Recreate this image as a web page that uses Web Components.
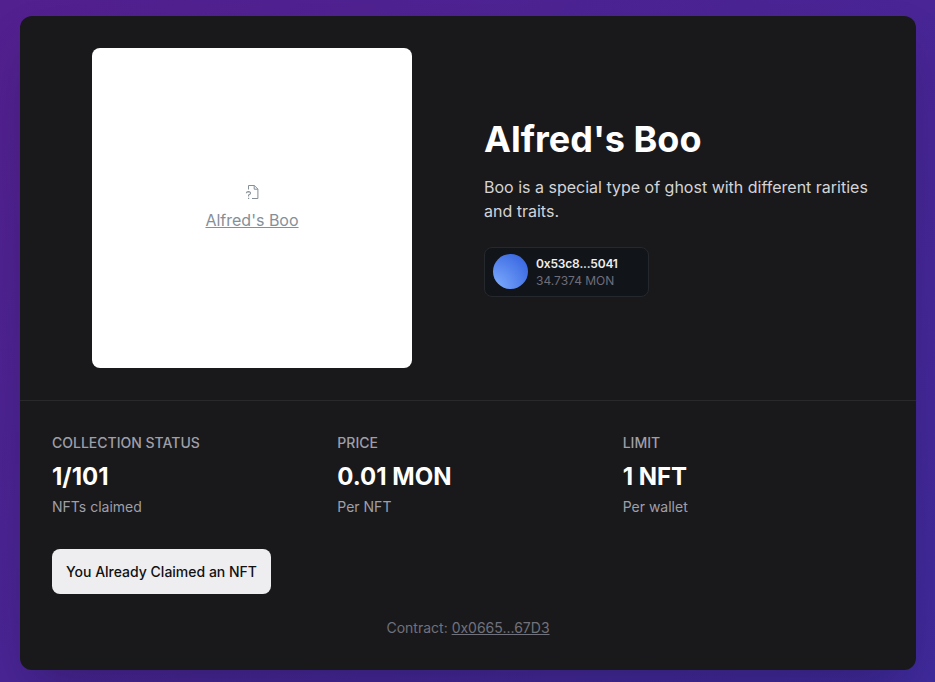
<!DOCTYPE html>
<html lang="en">
<head>
<meta charset="utf-8">
<title>Alfred's Boo</title>
<style>
html,body{margin:0;height:100%}
body{font-family:Inter,"Liberation Sans",sans-serif;overflow:hidden}
</style>
</head>
<body>
<nft-page></nft-page>
<script>
const define = (name, html) => customElements.define(name, class extends HTMLElement {
  constructor() {
    super();
    const t = document.createElement('template');
    t.innerHTML = html;
    this.attachShadow({ mode: 'open' }).append(t.content.cloneNode(true));
  }
});

define('nft-preview', `
<style>
:host{display:flex;flex-direction:column;align-items:center;justify-content:center;justify-self:center;
  width:320px;height:320px;border-radius:8px;background:#fff;color:#868f98;font-size:16px;line-height:24px}
svg{display:block;width:14px;height:16px;margin-bottom:8px}
span{text-decoration:underline}
</style>
<svg viewBox="0 0 14 16" fill="none" stroke="#868f98" stroke-width="1">
  <path d="M3.5 5.5V1.5H9.3L12.9 5.1V14.5H7"/>
  <path d="M9.2 1.5V5.2H12.9"/>
  <path d="M1.3 9.3Q1.5 7.6 3.5 7.6Q5.6 7.7 5.5 9.3Q5.4 10.4 3.6 11.1V12.6" stroke-width="1.1"/>
  <path d="M3 14.4H4.2" stroke-width="1.1"/>
</svg>
<span><slot></slot></span>`);

define('wallet-badge', `
<style>
:host{display:flex;align-items:center;gap:8px;box-sizing:border-box;width:165px;height:50px;padding:0 8px;
  border:1px solid #25282d;border-radius:8px;background:#111418}
i{width:35px;height:35px;margin-bottom:1px;border-radius:50%;background:radial-gradient(circle at bottom left,#82b1ff,#2f5ddd)}
div{display:flex;flex-direction:column;gap:0}
.a{color:#eeeef0;font-size:12px;font-weight:600;line-height:17px;letter-spacing:-.16px}
.b{color:#6f6d78;font-size:12px;line-height:17px}
</style>
<i></i><div><span class="a"><slot name="address"></slot></span><span class="b"><slot name="balance"></slot></span></div>`);

define('stat-item', `
<style>
:host{display:flex;flex-direction:column}
.l{font-size:14px;line-height:20px;font-weight:500;color:#9f9fa9;margin-bottom:8px}
.v{font-size:24px;line-height:32px;font-weight:700;color:#fff;margin-bottom:4px}
.n{font-size:14px;line-height:20px;color:#9f9fa9}
</style>
<span class="l"><slot name="label"></slot></span><span class="v"><slot name="value"></slot></span><span class="n"><slot name="note"></slot></span>`);

define('claim-button', `
<style>
:host{display:flex}
button{font:500 14px/21px Inter,"Liberation Sans",sans-serif;color:#111113;background:#eeeef0;border:0;border-radius:8px;height:45px;width:219px;padding:0;white-space:nowrap}
</style>
<button><slot></slot></button>`);

define('contract-line', `
<style>
:host{display:block;text-align:center;font-size:14px;line-height:20px;color:#71717b}
span{text-decoration:underline}
</style>
Contract: <span><slot></slot></span>`);

define('nft-page', `
<style>
:host{display:block;box-sizing:border-box;height:682px;padding:16px 19px 12px 20px;
  background:linear-gradient(to bottom right,#53208f,#3f2a9c)}
main{box-sizing:border-box;width:896px;height:654px;border-radius:12px;background:#19191b;
  box-shadow:0 25px 50px -12px rgba(0,0,0,.25)}
.hero{display:grid;grid-template-columns:1fr 1fr;gap:32px;padding:32px;align-items:center}
h1{margin:0 0 16px;font-size:36px;line-height:40px;font-weight:700;color:#fff}
p{margin:0 0 24px;font-size:16px;line-height:24px;color:#d4d4d8}
.details{border-top:1px solid #29292c;padding:32px}
.stats{display:grid;grid-template-columns:repeat(3,1fr);gap:24px;margin-bottom:32px}
claim-button{margin-bottom:24px}
</style>
<main>
  <section class="hero">
    <nft-preview>Alfred's Boo</nft-preview>
    <div>
      <h1>Alfred's Boo</h1>
      <p>Boo is a special type of ghost with different rarities and traits.</p>
      <wallet-badge><span slot="address">0x53c8...5041</span><span slot="balance">34.7374 MON</span></wallet-badge>
    </div>
  </section>
  <section class="details">
    <div class="stats">
      <stat-item><span slot="label">COLLECTION STATUS</span><span slot="value">1/101</span><span slot="note">NFTs claimed</span></stat-item>
      <stat-item><span slot="label">PRICE</span><span slot="value">0.01 MON</span><span slot="note">Per NFT</span></stat-item>
      <stat-item><span slot="label">LIMIT</span><span slot="value">1 NFT</span><span slot="note">Per wallet</span></stat-item>
    </div>
    <claim-button>You Already Claimed an NFT</claim-button>
    <contract-line>0x0665...67D3</contract-line>
  </section>
</main>`);
</script>
</body>
</html>
